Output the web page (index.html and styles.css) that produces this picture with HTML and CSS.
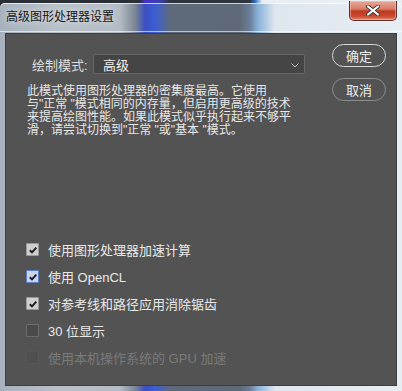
FILE: index.html
```html
<!DOCTYPE html>
<html lang="zh-CN">
<head>
    <meta charset="UTF-8">
    <meta name="viewport" content="width=device-width, initial-scale=1.0">
    <title>高级图形处理器设置</title>
    <link rel="stylesheet" href="styles.css">
</head>
<body>
    <div class="window">
        <div class="titlebar">
            <div class="title">高级图形处理器设置</div>
            <div class="close">
                <svg width="16" height="11" viewBox="0 0 16 11">
                    <path d="M3 1.5 L13 9.5 M13 1.5 L3 9.5" stroke="#3a3a3a" stroke-width="4" stroke-linecap="round"/>
                    <path d="M3 1.5 L13 9.5 M13 1.5 L3 9.5" stroke="#ffffff" stroke-width="2.2" stroke-linecap="round"/>
                </svg>
            </div>
        </div>
        <div class="client">
            <div class="form">
                <div class="mode-row">
                    <span class="mode-label">绘制模式:</span>
                    <div class="select">
                        <span>高级</span>
                        <svg class="chevron" width="8" height="5" viewBox="0 0 8 5">
                            <path d="M0.5 0.5 L4 4 L7.5 0.5" fill="none" stroke="#bdbdbd" stroke-width="1"/>
                        </svg>
                    </div>
                </div>
                <p class="desc">此模式使用图形处理器的密集度最高。它使用<br>与"正常 "模式相同的内存量，但启用更高级的技术<br>来提高绘图性能。如果此模式似乎执行起来不够平<br>滑，请尝试切换到"正常 "或"基本 "模式。</p>

                <div class="options">
                    <label class="option">
                        <span class="box checked">
                            <svg width="10" height="10" viewBox="0 0 10 10"><path d="M1.8 5.2 L4 7.4 L8.3 2.6" fill="none" stroke="#1e1e1e" stroke-width="2"/></svg>
                        </span>
                        使用图形处理器加速计算
                    </label>
                    <label class="option">
                        <span class="box checked focus">
                            <svg width="10" height="10" viewBox="0 0 10 10"><path d="M1.8 5.2 L4 7.4 L8.3 2.6" fill="none" stroke="#1e1e1e" stroke-width="2"/></svg>
                        </span>
                        使用 OpenCL
                    </label>
                    <label class="option">
                        <span class="box checked">
                            <svg width="10" height="10" viewBox="0 0 10 10"><path d="M1.8 5.2 L4 7.4 L8.3 2.6" fill="none" stroke="#1e1e1e" stroke-width="2"/></svg>
                        </span>
                        对参考线和路径应用消除锯齿
                    </label>
                    <label class="option">
                        <span class="box"></span>
                        30 位显示
                    </label>
                    <label class="option disabled">
                        <span class="box"></span>
                        使用本机操作系统的 GPU 加速
                    </label>
                </div>
            </div>
            <div class="buttons">
                <button class="btn primary">确定</button>
                <button class="btn">取消</button>
            </div>
        </div>
    </div>
</body>
</html>
```

FILE: styles.css
```css
body {
    margin: 0;
    padding: 0;
    width: 402px;
    height: 391px;
    overflow: hidden;
    background: linear-gradient(90deg, #2b2f36 0, #2b2f36 140px, #4630c8 145px, #3a3fb0 160px, #30343c 170px, #30343c 250px, #2f70c8 255px, #e8eef2 262px, #e8eef2 100%);
    font-family: "Liberation Sans", "Noto Sans CJK SC", sans-serif;
}
.window {
    margin-top: 3px;
    height: 388px;
    border-radius: 5px 5px 0 0;
    background: linear-gradient(90deg, #a7b2be 0, #b9c1c9 60px, #b3bcc5 120px, #7c8794 135px, #3b4fc0 145px, #3c5ed4 155px, #5e6a7b 170px, #5f6978 240px, #6a7f9a 250px, #8ab2da 258px, #dfe7ee 275px, #e6edf3 100%);
    box-shadow: inset 0 1px 0 rgba(255, 255, 255, 0.7);
    display: flex;
    flex-direction: column;
}
.titlebar {
    height: 28px;
    display: flex;
    justify-content: space-between;
    align-items: flex-start;
    border-bottom: 1px solid rgba(255, 255, 255, 0.6);
}
.title {
    padding: 6px 0 0 6px;
    font-size: 12px;
    line-height: 16px;
    color: #151515;
    text-shadow: 0 0 6px rgba(255, 255, 255, 0.8);
}
.close {
    width: 46px;
    height: 19px;
    margin: -2px 5px 0 0;
    border: 1px solid #5a3030;
    border-top: none;
    border-radius: 0 0 5px 5px;
    background: linear-gradient(180deg, #e9a896 0, #d9806c 40%, #c0391f 55%, #c84b30 80%, #e08a6a 100%);
    box-shadow: inset 0 0 0 1px rgba(255, 200, 190, 0.5);
    display: flex;
    justify-content: center;
    align-items: center;
}
.client {
    flex: 1;
    margin: 1px 5px 5px 5px;
    background-color: #535353;
    border: 1px solid #3e3e3e;
    display: flex;
    padding: 10px 0 0 21px;
}
.form {
    width: 278px;
    display: flex;
    flex-direction: column;
}
.mode-row {
    display: flex;
    align-items: center;
    margin-top: 10px;
    padding-left: 5px;
    height: 20px;
}
.mode-label {
    width: 61px;
    font-size: 13px;
    color: #dedede;
}
.select {
    flex: 1;
    height: 18px;
    border: 1px solid #676767;
    border-radius: 2px;
    background-color: #454545;
    display: flex;
    align-items: center;
    justify-content: space-between;
    padding: 0 5px 0 9px;
    font-size: 13px;
    color: #f0f0f0;
}
.chevron {
    margin-top: 3px;
}
.desc {
    margin: 11px 0 0 0;
    font-size: 12px;
    line-height: 13px;
    color: #e8e8e8;
    white-space: nowrap;
}
.options {
    margin-top: 99px;
    display: flex;
    flex-direction: column;
}
.option {
    height: 27px;
    display: flex;
    align-items: center;
    font-size: 13px;
    color: #e8e8e8;
}
.option.disabled {
    color: #7a7a7a;
}
.box {
    width: 11px;
    height: 11px;
    margin-left: -1px;
    margin-right: 9px;
    border: 1px solid #6c6c6c;
    border-radius: 1px;
    background-color: #4a4a4a;
    display: flex;
    justify-content: center;
    align-items: center;
}
.box.checked {
    border-color: #9a9a9a;
    background-color: #cfcfcf;
}
.box.focus {
    border-color: #5c7fc8;
    background-color: #c7d4ee;
}
.option.disabled .box {
    border-color: #575757;
    background-color: #505050;
}
.buttons {
    margin-left: 27px;
    display: flex;
    flex-direction: column;
    gap: 11px;
}
.btn {
    width: 54px;
    height: 23px;
    border: 1px solid #8c8c8c;
    border-radius: 12px;
    background-color: #535353;
    color: #ececec;
    font-family: "Liberation Sans", "Noto Sans CJK SC", sans-serif;
    font-size: 13px;
    padding: 0;
}
.btn.primary {
    border: 1.5px solid #d8d8d8;
}
```
